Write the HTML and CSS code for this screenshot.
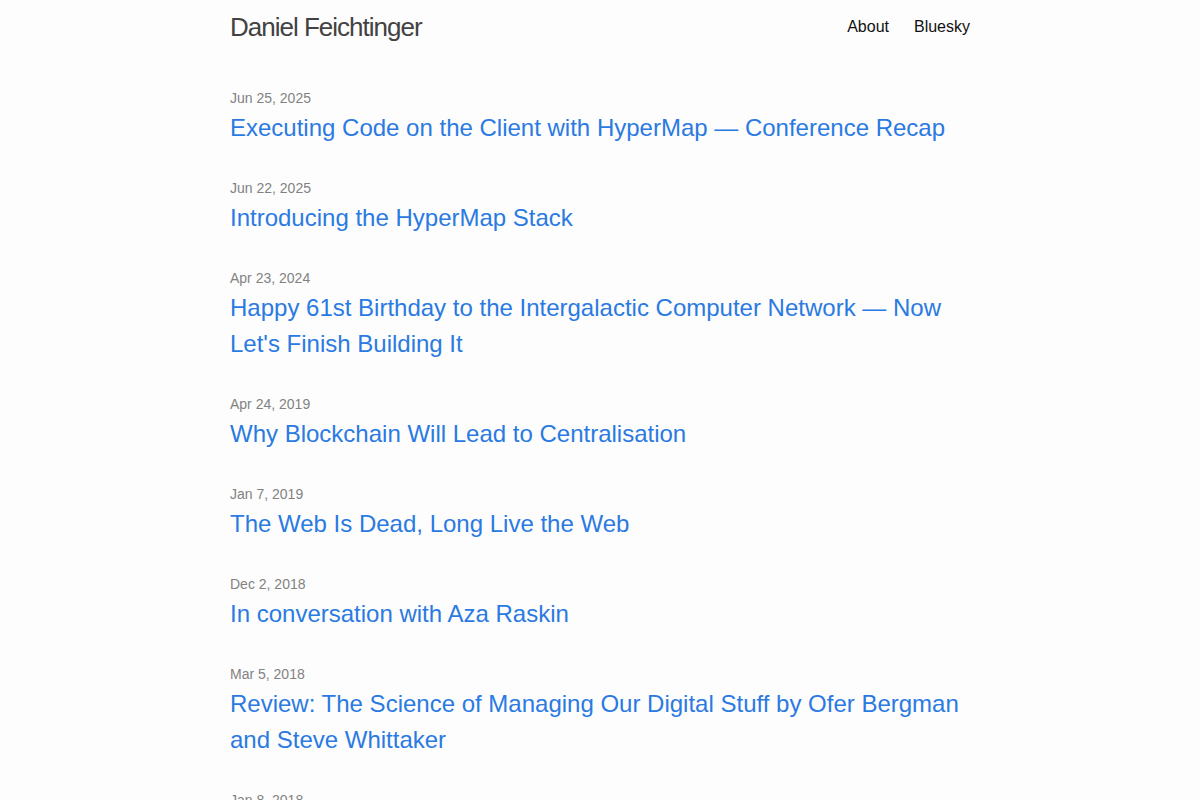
FILE: index.html
```html
<!DOCTYPE html>
<html lang="en">
<head>
<meta charset="utf-8">
<title>Daniel Feichtinger</title>
<link rel="stylesheet" href="styles.css">
</head>
<body>
<header class="site-header">
  <div class="wrapper header-inner">
    <a class="site-title" href="#">Daniel Feichtinger</a>
    <nav class="site-nav">
      <a class="nav-link" href="#">About</a>
      <a class="nav-link" href="#">Bluesky</a>
    </nav>
  </div>
</header>
<main class="page-content">
  <div class="wrapper">
    <ul class="post-list">
      <li class="post-item"><span class="post-meta">Jun 25, 2025</span><h3 class="post-title"><a class="post-link" href="#">Executing Code on the Client with HyperMap — Conference Recap</a></h3></li>
      <li class="post-item"><span class="post-meta">Jun 22, 2025</span><h3 class="post-title"><a class="post-link" href="#">Introducing the HyperMap Stack</a></h3></li>
      <li class="post-item"><span class="post-meta">Apr 23, 2024</span><h3 class="post-title"><a class="post-link" href="#">Happy 61st Birthday to the Intergalactic Computer Network — Now Let's Finish Building It</a></h3></li>
      <li class="post-item"><span class="post-meta">Apr 24, 2019</span><h3 class="post-title"><a class="post-link" href="#">Why Blockchain Will Lead to Centralisation</a></h3></li>
      <li class="post-item"><span class="post-meta">Jan 7, 2019</span><h3 class="post-title"><a class="post-link" href="#">The Web Is Dead, Long Live the Web</a></h3></li>
      <li class="post-item"><span class="post-meta">Dec 2, 2018</span><h3 class="post-title"><a class="post-link" href="#">In conversation with Aza Raskin</a></h3></li>
      <li class="post-item"><span class="post-meta">Mar 5, 2018</span><h3 class="post-title"><a class="post-link" href="#">Review: The Science of Managing Our Digital Stuff by Ofer Bergman and Steve Whittaker</a></h3></li>
      <li class="post-item"><span class="post-meta">Jan 8, 2018</span><h3 class="post-title"><a class="post-link" href="#">Further Reading</a></h3></li>
    </ul>
  </div>
</main>
</body>
</html>
```

FILE: styles.css
```css
html, body {
  margin: 0;
  padding: 0;
}
body {
  background: #fdfdfd;
  color: #111111;
  font-family: "Liberation Sans", Arial, Helvetica, sans-serif;
  font-size: 16px;
  line-height: 1.5;
}
a {
  text-decoration: none;
}
.wrapper {
  max-width: 740px;
  margin: 0 auto;
}
.header-inner {
  display: flex;
  justify-content: space-between;
  align-items: center;
  height: 54px;
}
.site-title {
  font-size: 26px;
  letter-spacing: -1px;
  color: #424242;
  line-height: 54px;
}
.site-nav {
  display: flex;
  gap: 25px;
}
.nav-link {
  color: #111111;
  font-size: 16px;
  line-height: 54px;
}
.page-content {
  padding-top: 34px;
}
.post-list {
  list-style: none;
  margin: 0;
  padding: 0;
}
.post-item {
  margin-bottom: 32px;
}
.post-meta {
  display: block;
  font-size: 14px;
  line-height: 20px;
  color: #828282;
}
.post-title {
  margin: 2px 0 0;
  font-size: 24px;
  font-weight: normal;
  line-height: 36px;
}
.post-link {
  color: #2a7ae2;
}
```
